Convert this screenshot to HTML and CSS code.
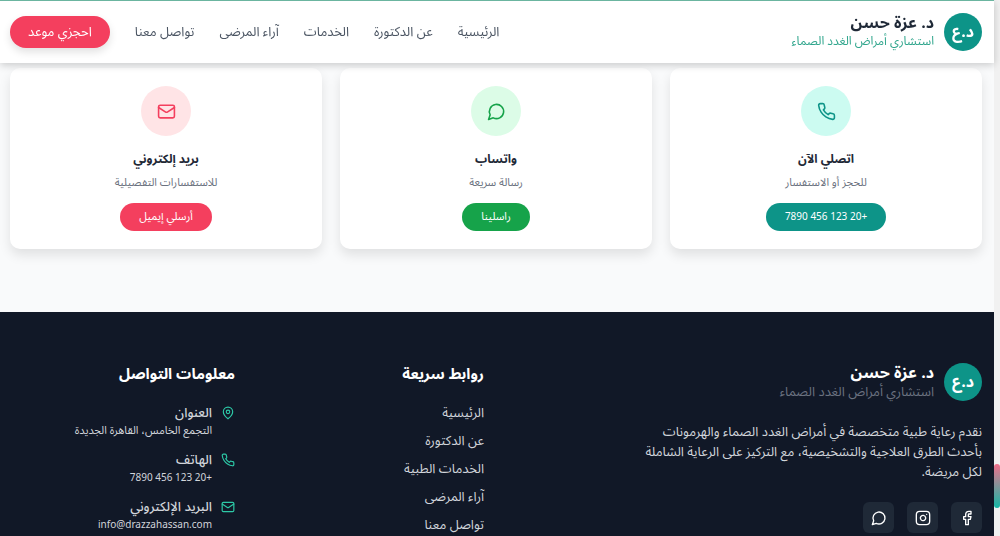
FILE: index.html
```html
<!DOCTYPE html>
<html lang="ar" dir="rtl">
<head>
	<meta charset="UTF-8">
	<meta name="viewport" content="width=device-width, initial-scale=1.0">
	<title>د. عزة حسن</title>
	<link rel="stylesheet" href="styles.css">
</head>
<body>
	<!-- icons -->
	<svg class="sprite" aria-hidden="true">
		<symbol id="icon-phone" viewBox="0 0 24 24"><path d="M22 16.92v3a2 2 0 0 1-2.18 2 19.79 19.79 0 0 1-8.63-3.07 19.5 19.5 0 0 1-6-6 19.79 19.79 0 0 1-3.07-8.67A2 2 0 0 1 4.11 2h3a2 2 0 0 1 2 1.72 12.84 12.84 0 0 0 .7 2.81 2 2 0 0 1-.45 2.11L8.09 9.91a16 16 0 0 0 6 6l1.27-1.27a2 2 0 0 1 2.11-.45 12.84 12.84 0 0 0 2.81.7A2 2 0 0 1 22 16.92z"/></symbol>
		<symbol id="icon-chat" viewBox="0 0 24 24"><path d="M7.9 20A9 9 0 1 0 4 16.1L2 22Z"/></symbol>
		<symbol id="icon-mail" viewBox="0 0 24 24"><rect x="2" y="4" width="20" height="16" rx="2"/><path d="m22 7-8.97 5.7a1.94 1.94 0 0 1-2.06 0L2 7"/></symbol>
		<symbol id="icon-pin" viewBox="0 0 24 24"><path d="M20 10c0 6-8 12-8 12s-8-6-8-12a8 8 0 0 1 16 0Z"/><circle cx="12" cy="10" r="3"/></symbol>
		<symbol id="icon-facebook" viewBox="0 0 24 24"><path d="M18 2h-3a5 5 0 0 0-5 5v3H7v4h3v8h4v-8h3l1-4h-4V7a1 1 0 0 1 1-1h3z"/></symbol>
		<symbol id="icon-instagram" viewBox="0 0 24 24"><rect x="2" y="2" width="20" height="20" rx="5"/><path d="M16 11.37A4 4 0 1 1 12.63 8 4 4 0 0 1 16 11.37z"/><path d="M17.5 6.5h.01"/></symbol>
	</svg>

	<div class="page">
		<header class="header">
			<div class="brand">
				<span class="logo">د.ع</span>
				<div>
					<h1 class="brand-name">د. عزة حسن</h1>
					<p class="brand-title">استشاري أمراض الغدد الصماء</p>
				</div>
			</div>
			<nav class="nav">
				<a href="#home">الرئيسية</a>
				<a href="#about">عن الدكتورة</a>
				<a href="#services">الخدمات</a>
				<a href="#reviews">آراء المرضى</a>
				<a href="#contact">تواصل معنا</a>
				<button class="book-button" type="button">احجزي موعد</button>
			</nav>
		</header>

		<main class="cards" id="contact">
			<section class="card card-teal">
				<span class="card-icon"><svg class="icon"><use href="#icon-phone"/></svg></span>
				<h3>اتصلي الآن</h3>
				<p>للحجز أو الاستفسار</p>
				<a class="card-button latin" href="tel:+201234567890">+20 123 456 7890</a>
			</section>
			<section class="card card-green">
				<span class="card-icon"><svg class="icon"><use href="#icon-chat"/></svg></span>
				<h3>واتساب</h3>
				<p>رسالة سريعة</p>
				<a class="card-button" href="https://wa.me/201234567890">راسلينا</a>
			</section>
			<section class="card card-rose">
				<span class="card-icon"><svg class="icon"><use href="#icon-mail"/></svg></span>
				<h3>بريد إلكتروني</h3>
				<p>للاستفسارات التفصيلية</p>
				<a class="card-button" href="mailto:info@drazzahassan.com">أرسلي إيميل</a>
			</section>
		</main>

		<footer class="footer">
			<div class="footer-about">
				<div class="brand">
					<span class="logo">د.ع</span>
					<div>
						<h2 class="brand-name">د. عزة حسن</h2>
						<p class="brand-title">استشاري أمراض الغدد الصماء</p>
					</div>
				</div>
				<p class="about-text">نقدم رعاية طبية متخصصة في أمراض الغدد الصماء والهرمونات بأحدث الطرق العلاجية والتشخيصية، مع التركيز على الرعاية الشاملة لكل مريضة.</p>
				<div class="social">
					<a href="#facebook" aria-label="Facebook"><svg class="icon"><use href="#icon-facebook"/></svg></a>
					<a href="#instagram" aria-label="Instagram"><svg class="icon"><use href="#icon-instagram"/></svg></a>
					<a href="#whatsapp" aria-label="WhatsApp"><svg class="icon"><use href="#icon-chat"/></svg></a>
				</div>
			</div>
			<div>
				<h3 class="footer-heading">روابط سريعة</h3>
				<ul class="links">
					<li><a href="#home">الرئيسية</a></li>
					<li><a href="#about">عن الدكتورة</a></li>
					<li><a href="#services">الخدمات الطبية</a></li>
					<li><a href="#reviews">آراء المرضى</a></li>
					<li><a href="#contact">تواصل معنا</a></li>
				</ul>
			</div>
			<div>
				<h3 class="footer-heading">معلومات التواصل</h3>
				<ul class="info">
					<li>
						<svg class="icon"><use href="#icon-pin"/></svg>
						<div><h4>العنوان</h4><p>التجمع الخامس، القاهرة الجديدة</p></div>
					</li>
					<li>
						<svg class="icon"><use href="#icon-phone"/></svg>
						<div><h4>الهاتف</h4><p class="latin">+20 123 456 7890</p></div>
					</li>
					<li>
						<svg class="icon"><use href="#icon-mail"/></svg>
						<div><h4>البريد الإلكتروني</h4><p class="latin">info@drazzahassan.com</p></div>
					</li>
				</ul>
			</div>
		</footer>
	</div>
	<div class="scrollbar"><span class="scrollbar-thumb"></span></div>
</body>
</html>
```
FILE: styles.css
```css
* {
	box-sizing: border-box;
	margin: 0;
	padding: 0;
}

body {
	height: 100vh;
	overflow: hidden;
	background-color: #f9fafb;
	color: #1f2937;
	font-family: "Noto Sans Arabic", "Noto Sans", "DejaVu Sans", sans-serif;
	font-size: 13px;
}

a {
	color: inherit;
	text-decoration: none;
}

ul {
	list-style: none;
}

.sprite {
	position: absolute;
	width: 0;
	height: 0;
}

.icon {
	flex-shrink: 0;
	width: 16px;
	height: 16px;
	fill: none;
	stroke: currentColor;
	stroke-width: 2;
	stroke-linecap: round;
	stroke-linejoin: round;
}

.page {
	margin-right: 6px;
}

/* header */
.header {
	position: relative;
	z-index: 1;
	display: flex;
	align-items: center;
	justify-content: space-between;
	height: 63px;
	padding: 0 12px 0 10px;
	background-color: #ffffff;
	border-top: 1px solid #6bb5a0;
	box-shadow: 0 2px 8px rgba(0, 0, 0, 0.2);
}

.brand {
	display: flex;
	align-items: center;
	gap: 10px;
}

.logo {
	display: flex;
	align-items: center;
	justify-content: center;
	width: 38px;
	height: 38px;
	border-radius: 50%;
	background-color: #0d9488;
	color: #ffffff;
	font-size: 16px;
	font-weight: bold;
}

.brand-name {
	font-size: 16px;
	line-height: 20px;
}

.brand-title {
	color: #2fa58c;
	font-size: 12px;
	line-height: 18px;
}

.nav {
	display: flex;
	align-items: center;
	gap: 25px;
	color: #4b5563;
}

.book-button {
	height: 32px;
	padding: 0 18px;
	border: none;
	border-radius: 16px;
	background-color: #f43f5e;
	color: #ffffff;
	font: inherit;
	box-shadow: 0 4px 8px rgba(0, 0, 0, 0.12);
	cursor: pointer;
}

/* contact cards */
.cards {
	display: grid;
	grid-template-columns: repeat(3, 1fr);
	gap: 18px;
	padding: 5px 12px 63px 10px;
}

.card {
	display: flex;
	flex-direction: column;
	align-items: center;
	padding: 18px;
	border-radius: 10px;
	background-color: #ffffff;
	box-shadow: 0 6px 12px rgba(0, 0, 0, 0.1);
}

.card-icon {
	display: flex;
	align-items: center;
	justify-content: center;
	width: 50px;
	height: 50px;
	margin-bottom: 12px;
	border-radius: 50%;
}

.card-icon .icon {
	width: 19px;
	height: 19px;
}

.card h3 {
	margin-bottom: 4px;
	font-size: 12px;
	line-height: 23px;
}

.card p {
	margin-bottom: 12px;
	color: #6b7280;
	font-size: 11px;
	line-height: 16px;
}

.card-button {
	padding: 0 19px;
	border-radius: 14px;
	color: #ffffff;
	font-size: 11px;
	line-height: 28px;
}

.card-teal .card-icon {
	background-color: #ccfbf1;
	color: #0d9488;
}

.card-teal .card-button {
	background-color: #0d9488;
}

.card-green .card-icon {
	background-color: #dcfce7;
	color: #16a34a;
}

.card-green .card-button {
	background-color: #16a34a;
}

.card-rose .card-icon {
	background-color: #ffe4e6;
	color: #f43f5e;
}

.card-rose .card-button {
	background-color: #f43f5e;
}

/* footer */
.footer {
	display: grid;
	grid-template-columns: repeat(4, 1fr);
	gap: 24px;
	padding: 51px 12px 51px 10px;
	background-color: #111827;
	color: #d1d5db;
}

.footer-about {
	grid-column: span 2;
}

.footer .brand-name {
	color: #ffffff;
}

.footer .brand-title {
	color: #6b7280;
	font-size: 13px;
}

.about-text {
	max-width: 350px;
	margin: 21px 0 20px;
	line-height: 20px;
}

.social {
	display: flex;
	gap: 13px;
}

.social a {
	display: flex;
	align-items: center;
	justify-content: center;
	width: 31px;
	height: 31px;
	border-radius: 6px;
	background-color: #1f2937;
	color: #ffffff;
}

.footer-heading {
	margin-bottom: 18px;
	color: #ffffff;
	font-size: 15px;
	line-height: 22px;
}

.links {
	display: grid;
	gap: 8px;
	line-height: 20px;
}

.info {
	display: grid;
	gap: 11px;
}

.info li {
	display: flex;
	gap: 9px;
}

.info .icon {
	width: 14px;
	height: 14px;
	margin-top: 3px;
	color: #2dc9a7;
}

.info h4 {
	font-size: 13px;
	font-weight: 500;
	line-height: 20px;
}

.info p {
	font-size: 11px;
	line-height: 16px;
}

.card .latin,
.info .latin {
	font-size: 10px;
}

/* page scrollbar */
.scrollbar {
	position: fixed;
	top: 0;
	right: 0;
	display: flex;
	flex-direction: column;
	justify-content: flex-end;
	width: 6px;
	height: 100%;
	padding-bottom: 28px;
	background-color: #f1f1f1;
}

.scrollbar-thumb {
	height: 44px;
	border-radius: 3px;
	background: linear-gradient(#f0708c, #14b8a6);
}
```
